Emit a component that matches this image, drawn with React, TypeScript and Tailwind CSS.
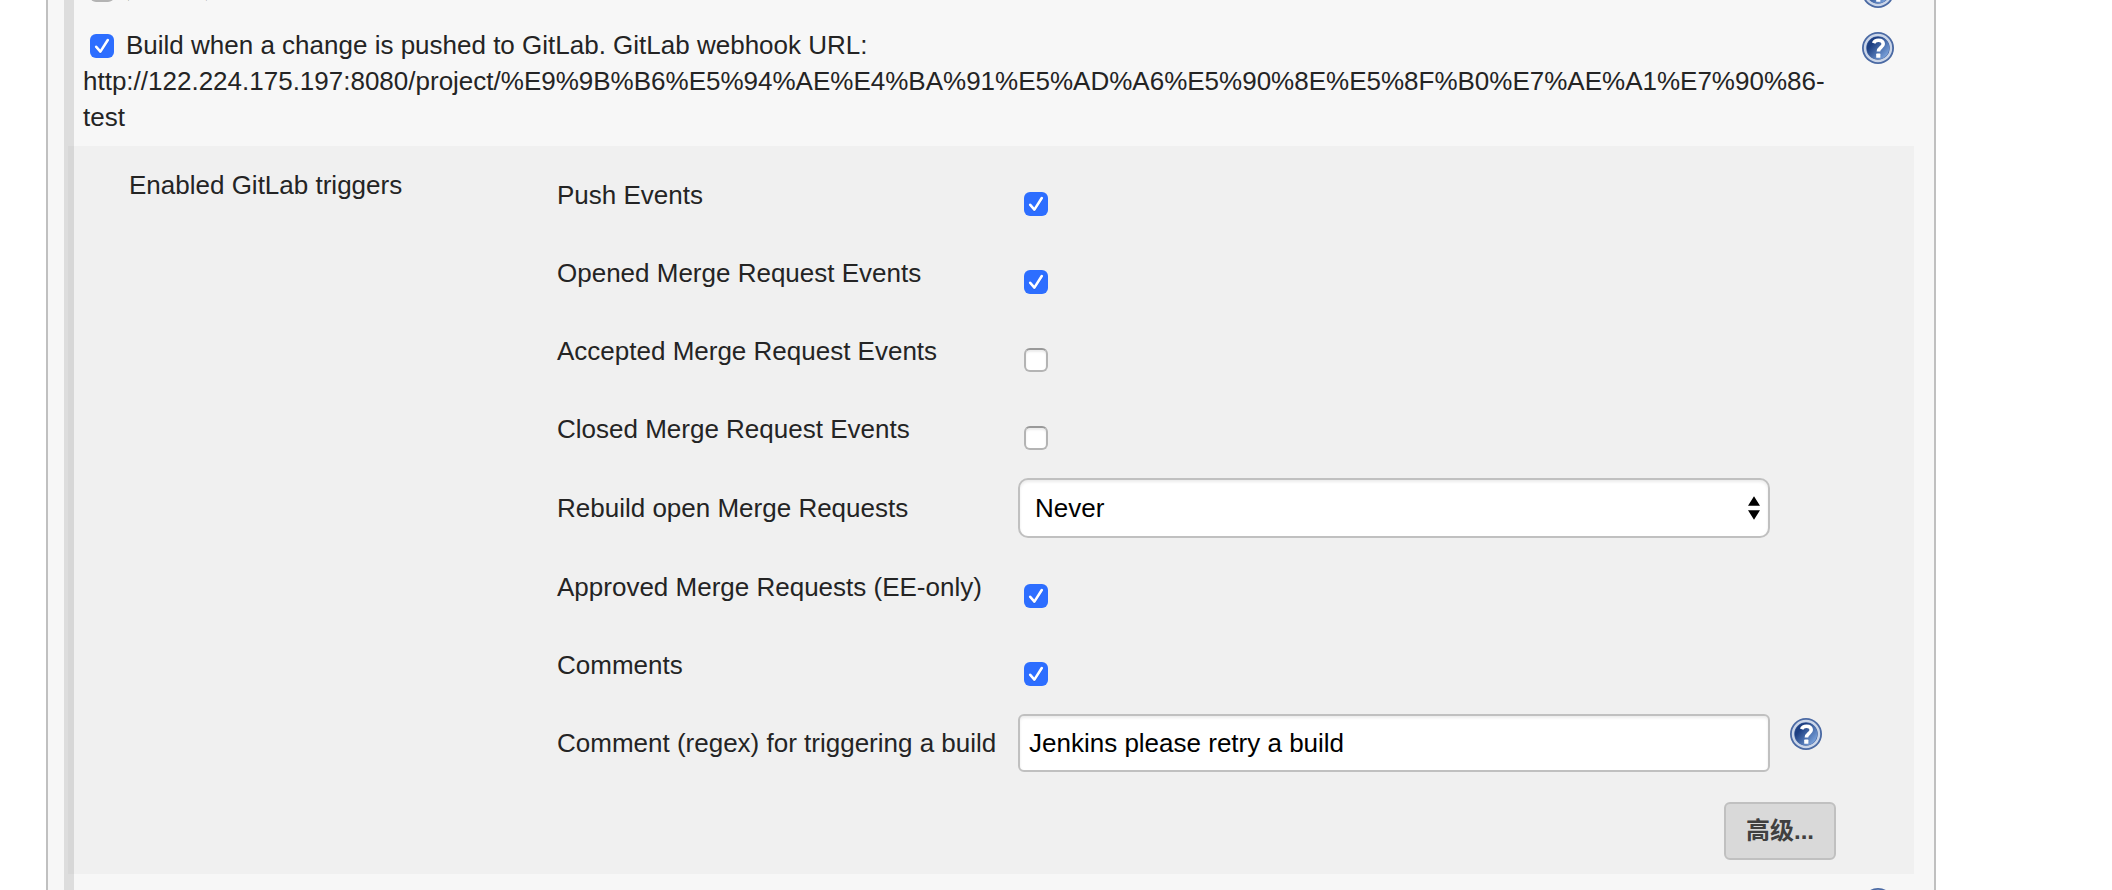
import { useId } from "react";
import type { ReactNode } from "react";

function HelpIcon() {
  const id = useId();
  return (
    <svg viewBox="0 0 32 32" className="block size-8" aria-hidden="true">
      <defs>
        <linearGradient id={id} x1="0.1" y1="0.15" x2="0.9" y2="0.85">
          <stop offset="0.2" stopColor="#1d3f82" />
          <stop offset="1" stopColor="#7ba3dc" />
        </linearGradient>
      </defs>
      <circle cx="16" cy="16" r="16" fill="#4a69a3" />
      <circle cx="16" cy="16" r="13" fill="none" stroke="#cbd6e9" strokeWidth="2.4" />
      <circle cx="16" cy="16" r="11.2" fill={`url(#${id})`} />
      <path
        d="M11.6 11.2C12.4 9.1 14.2 8.2 16.4 8.2c2.8 0 4.8 1.4 4.8 3.8 0 3.4-4.8 3.5-4.8 7.6"
        fill="none"
        stroke="#fff"
        strokeWidth="3.6"
      />
      <rect x="14.2" y="21.6" width="4.2" height="4.2" rx="0.6" fill="#fff" />
    </svg>
  );
}

function HelpLink({ label }: { label: string }) {
  return (
    <a href="#help" aria-label={label} className="block shrink-0">
      <HelpIcon />
    </a>
  );
}

function Checkbox({ id, checked }: { id: string; checked?: boolean }) {
  return (
    <span className="grid size-6 shrink-0">
      <input
        id={id}
        type="checkbox"
        defaultChecked={checked}
        className="peer col-start-1 row-start-1 size-6 appearance-none rounded-md border-2 border-[#b4b4b4] border-t-[#999999] bg-white shadow-[inset_0_2px_2px_#ececec] checked:border-0 checked:bg-[#2d6eff] checked:shadow-none"
      />
      <svg
        viewBox="0 0 24 24"
        className="pointer-events-none invisible col-start-1 row-start-1 size-6 peer-checked:visible"
        aria-hidden="true"
      >
        <path
          d="M6.2 13.6l4.2 4.8L17.8 6.8"
          fill="none"
          stroke="#1f52c4"
          strokeOpacity="0.5"
          strokeWidth="2.6"
          strokeLinecap="round"
          strokeLinejoin="round"
        />
        <path
          d="M6.2 12.8l4.2 4.8L17.8 6"
          fill="none"
          stroke="#fff"
          strokeWidth="2.6"
          strokeLinecap="round"
          strokeLinejoin="round"
        />
      </svg>
    </span>
  );
}

function TriggerRow({ children, help }: { children?: ReactNode; help: string }) {
  return (
    <div className="flex items-start justify-between border-l-[6px] border-[#dddddd] pr-5 pl-[9px]">
      <div className="min-w-0 flex-1">{children}</div>
      <div className="pt-[5px]">
        <HelpLink label={help} />
      </div>
    </div>
  );
}

function Field({
  id,
  label,
  help,
  children,
}: {
  id: string;
  label: string;
  help?: string;
  children: ReactNode;
}) {
  return (
    <div className="flex items-center">
      <label htmlFor={id} className="w-[461px] shrink-0">
        {label}
      </label>
      <div className="min-w-0 flex-1">{children}</div>
      <div className="w-[124px] shrink-0 self-start pt-1 pl-5">
        {help && <HelpLink label={help} />}
      </div>
    </div>
  );
}

function CheckField({ id, label, checked }: { id: string; label: string; checked?: boolean }) {
  return (
    <Field id={id} label={label}>
      <div className="h-[58px] pt-[26px] pl-1.5">
        <Checkbox id={id} checked={checked} />
      </div>
    </Field>
  );
}

export default function App() {
  return (
    <div className="h-screen overflow-hidden bg-white font-['Liberation_Sans','Noto_Sans_CJK_SC',sans-serif] text-[26px] leading-9 text-[#242424]">
      <main className="mr-[176px] ml-[46px] h-full overflow-hidden border-x-2 border-[#c0c0c0] bg-[#f7f7f7] pr-5 pl-4">
        <form className="-mt-[29px] border-l-4 border-[#dddddd]">
          <TriggerRow help="Help: 定时构建">
            <div className="flex gap-3 pl-[7px]">
              <div className="pt-[7px]">
                <Checkbox id="periodic" />
              </div>
              <label htmlFor="periodic">定时构建</label>
            </div>
          </TriggerRow>
          <div className="h-[19px] border-l-[6px] border-[#dddddd]" />
          <TriggerRow help="Help: GitLab webhook">
            <div className="flex gap-3 pl-[7px]">
              <div className="pt-[7px]">
                <Checkbox id="push-build" checked />
              </div>
              <label htmlFor="push-build">
                Build when a change is pushed to GitLab. GitLab webhook URL:
              </label>
            </div>
            <p>
              http://122.224.175.197:8080/project/%E9%9B%B6%E5%94%AE%E4%BA%91%E5%AD%A6%E5%90%8E%E5%8F%B0%E7%AE%A1%E7%90%86-test
            </p>
          </TriggerRow>
          <div className="h-[11px] border-l-[6px] border-[#dddddd]" />

          <section className="flex border-l-[6px] border-[#d7d7d7] bg-[#f0f0f0] pt-5 pb-3.5 pl-[55px]">
            <h2 className="w-[428px] shrink-0 pt-px">Enabled GitLab triggers</h2>
            <div className="flex min-w-0 flex-1 flex-col gap-5 pr-5">
              <CheckField id="push" label="Push Events" checked />
              <CheckField id="opened" label="Opened Merge Request Events" checked />
              <CheckField id="accepted" label="Accepted Merge Request Events" />
              <CheckField id="closed" label="Closed Merge Request Events" />
              <Field id="rebuild" label="Rebuild open Merge Requests">
                <div className="grid items-center">
                  <select
                    id="rebuild"
                    className="col-start-1 row-start-1 h-[60px] w-full appearance-none rounded-[10px] border-2 border-[#c0c0c0] bg-white px-[15px] text-black shadow-[inset_0_2px_3px_#ececec]"
                  >
                    <option>Never</option>
                  </select>
                  <svg
                    viewBox="0 0 12 24"
                    className="pointer-events-none col-start-1 row-start-1 mr-2.5 h-6 w-3 justify-self-end"
                    aria-hidden="true"
                  >
                    <path d="M0 9.7L6 0.2L12 9.7ZM0 14.3H12L6 23.8Z" fill="#000" />
                  </svg>
                </div>
              </Field>
              <CheckField id="approved" label="Approved Merge Requests (EE-only)" checked />
              <CheckField id="comments" label="Comments" checked />
              <Field
                id="regex"
                label="Comment (regex) for triggering a build"
                help="Help: Comment (regex) for triggering a build"
              >
                <input
                  id="regex"
                  type="text"
                  defaultValue="Jenkins please retry a build"
                  className="block h-[58px] w-full rounded-md border-2 border-[#c0c0c0] bg-white px-[9px] text-black shadow-[inset_0_2px_3px_#ececec]"
                />
              </Field>
              <div className="flex justify-end pt-2.5 pr-[58px]">
                <button
                  type="button"
                  className="h-[58px] rounded-md border-2 border-[#c0c0c0] bg-[#d9d9d9] px-5 text-2xl font-bold text-[#404040]"
                >
                  高级...
                </button>
              </div>
            </div>
          </section>
          <div className="h-[9px] border-l-[6px] border-[#dddddd]" />
          <TriggerRow help="Help" />
        </form>
      </main>
    </div>
  );
}
